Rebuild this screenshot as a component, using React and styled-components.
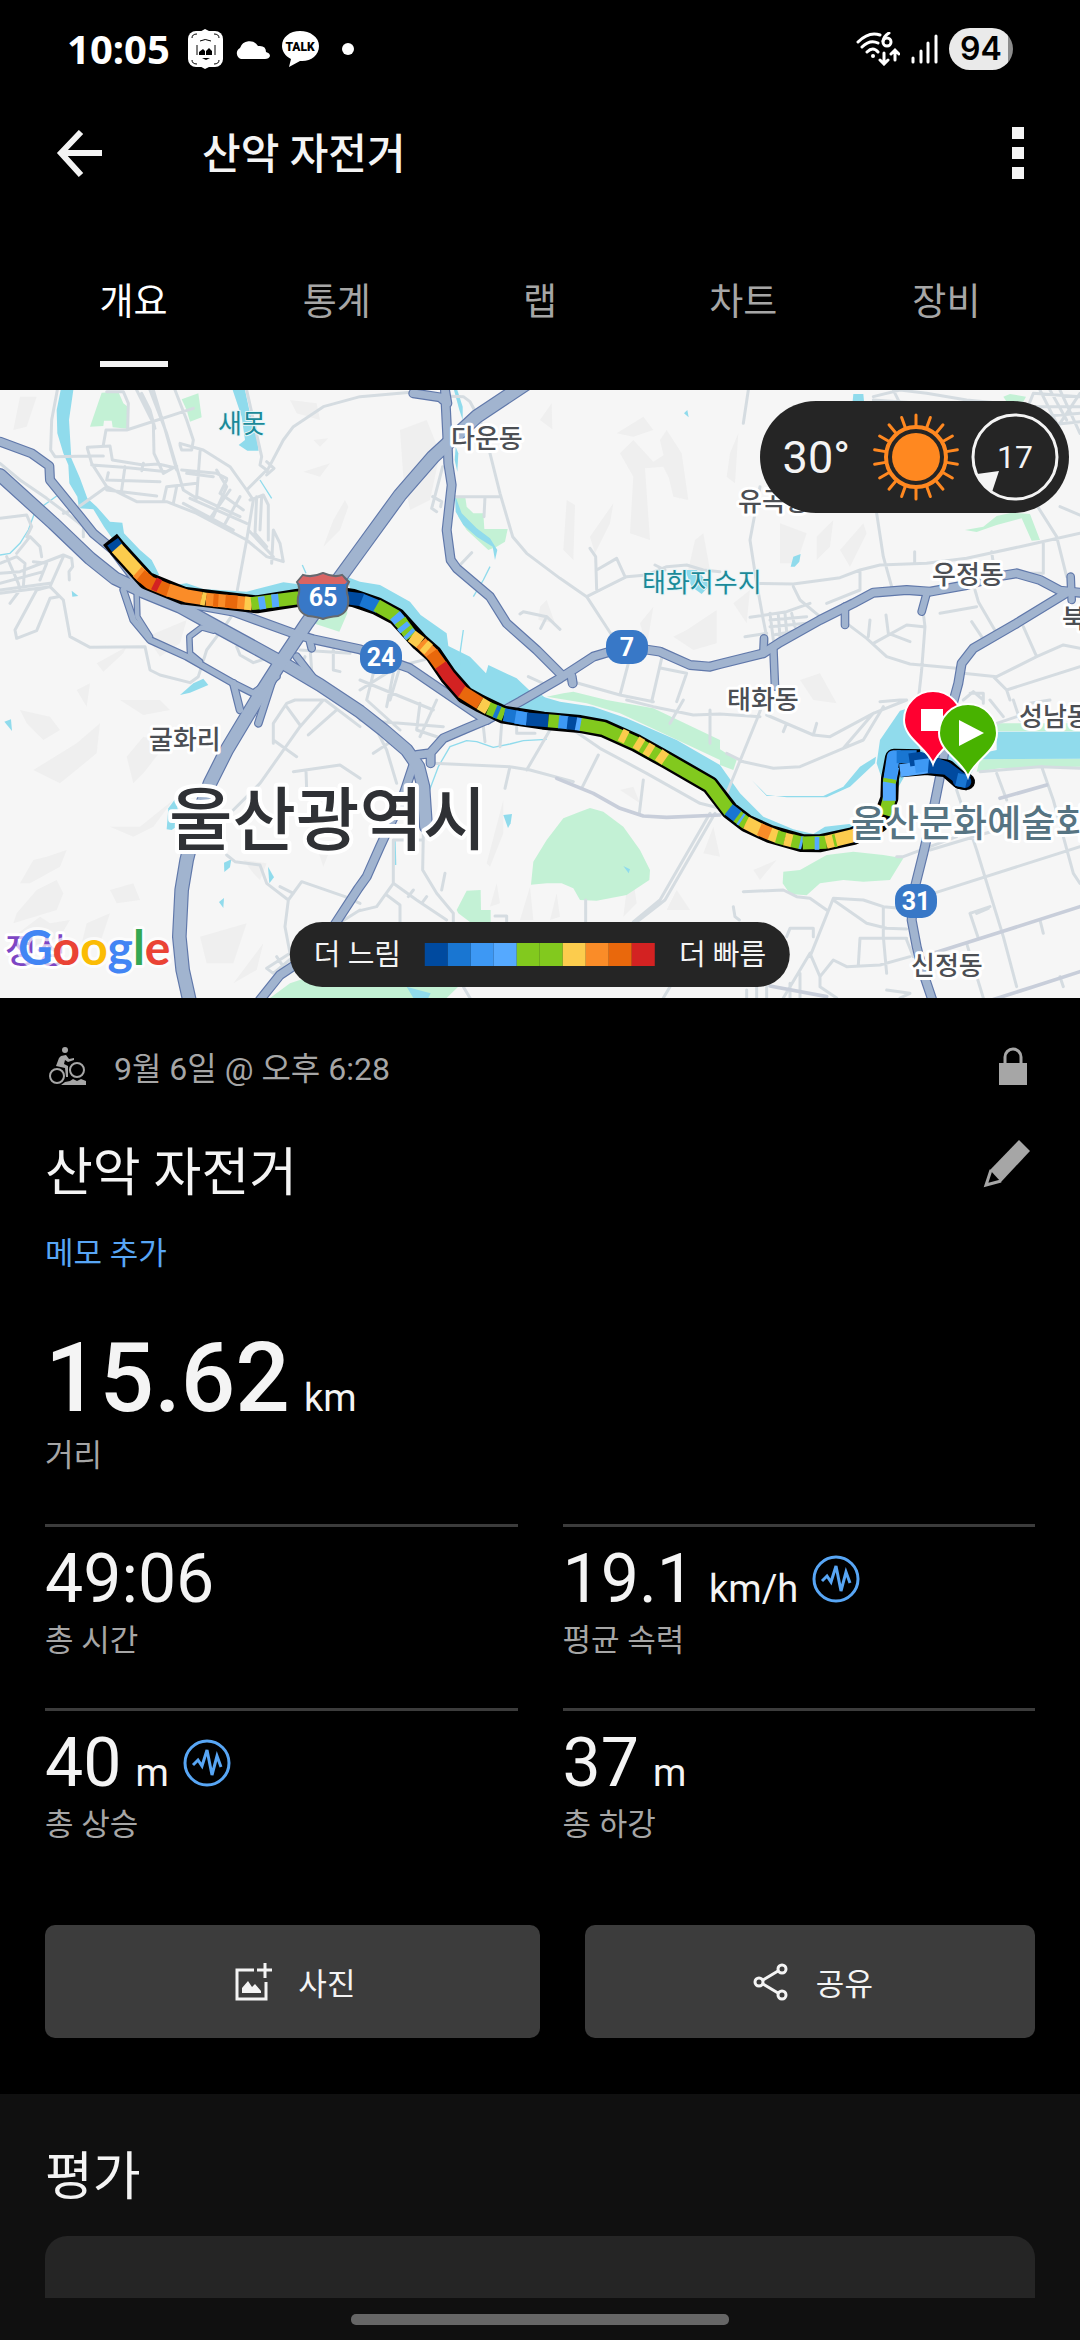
import React from 'react';
import styled, { createGlobalStyle } from 'styled-components';

const GlobalStyle = createGlobalStyle`
  * {
    box-sizing: border-box;
  }
  body {
    margin: 0;
    background: #000;
    color: #f4f4f4;
    font-family: Roboto, "Noto Sans CJK KR", sans-serif;
  }
  button {
    padding: 0;
    border: 0;
    background: none;
    color: inherit;
    font: inherit;
    cursor: pointer;
  }
`;

const Page = styled.div`
  display: flex;
  flex-direction: column;
  min-height: 100vh;
`;

const StatusBar = styled.div`
  display: flex;
  align-items: center;
  justify-content: space-between;
  height: 98px;
  padding: 0 67px;
`;

const StatusGroup = styled.div`
  display: flex;
  align-items: center;
  gap: ${props => props.gap}px;
`;

const Clock = styled.span`
  margin-right: 6px;
  color: #fff;
  font-family: "Noto Sans", sans-serif;
  font-size: 40px;
  font-weight: 700;
  line-height: 48px;
`;

const Dot = styled.span`
  width: 12px;
  height: 12px;
  margin-left: 11px;
  border-radius: 50%;
  background: #fff;
`;

const Battery = styled.span`
  width: 64px;
  height: 42px;
  border-radius: 21px;
  background: linear-gradient(to right, #eaeaea 59px, #8c8c8c 59px);
  color: #000;
  font-family: Inter, sans-serif;
  font-size: 32px;
  font-weight: 600;
  line-height: 42px;
  text-align: center;
`;

const Header = styled.header`
  display: flex;
  align-items: center;
  height: 110px;
  padding: 0 56px;
`;

const HeaderTitle = styled.h1`
  flex: 1;
  margin: 0 0 0 99px;
  padding-top: 4px;
  font-size: 42px;
  font-weight: 500;
  line-height: 60px;
`;

const IconButton = styled.button`
  display: flex;
`;

const Tabs = styled.nav`
  display: flex;
  padding: 68px 32px 23px;
`;

const Tab = styled.button`
  flex: 1;
  color: ${props => props.$active ? '#fff' : '#a6a6a6'};
  font-size: 37px;
  line-height: 54px;
`;

const TabLabel = styled.span`
  display: inline-block;
  padding-bottom: 31px;
  border-bottom: 6px solid ${props => props.$active ? '#f4f4f4' : 'transparent'};
`;

const MapPanel = styled.section`
  position: relative;
`;

const MapDrawing = styled.svg`
  display: block;
  width: 100%;
  height: auto;
  font-family: Roboto, "Noto Sans CJK KR", sans-serif;
`;

const WeatherPill = styled.div`
  position: absolute;
  top: 11px;
  right: 11px;
  display: flex;
  align-items: center;
  gap: 11px;
  height: 112px;
  padding: 0 10px 0 23px;
  border-radius: 56px;
  background: #252525;
`;

const Temperature = styled.span`
  margin-right: 11px;
  font-size: 45px;
`;

const WindBadge = styled.span`
  position: relative;
  display: flex;
  align-items: center;
  justify-content: center;
  width: 88px;
  height: 88px;
  font-size: 32px;
`;

const WindDial = styled.svg`
  position: absolute;
  inset: 0;
`;

const LegendPill = styled.div`
  position: absolute;
  bottom: 11px;
  left: 50%;
  display: flex;
  align-items: center;
  gap: 24px;
  height: 65px;
  padding: 0 24px;
  border-radius: 33px;
  background: #252525;
  font-size: 29px;
  line-height: 44px;
  white-space: nowrap;
  transform: translateX(-50%);
`;

const LegendBar = styled.div`
  display: flex;
`;

const LegendStep = styled.span`
  width: 23px;
  height: 23px;
  background: ${props => props.color};
`;

const Details = styled.section`
  padding: 42px 45px 56px;
`;

const MetaRow = styled.div`
  display: flex;
  align-items: center;
  height: 52px;
  padding: 0 6px 0 3px;
`;

const MetaText = styled.span`
  flex: 1;
  margin-left: 26px;
  color: #a6a6a6;
  font-size: 32px;
`;

const TitleRow = styled.div`
  display: flex;
  align-items: flex-start;
  justify-content: space-between;
  margin-top: 46px;
  padding-right: 4px;
`;

const Title = styled.h2`
  margin: 0;
  padding-top: 4px;
  font-size: 52px;
  font-weight: 400;
  line-height: 64px;
`;

const NoteLink = styled.a`
  display: block;
  width: fit-content;
  margin-top: 26px;
  color: #58a6f5;
  font-size: 31px;
  line-height: 44px;
  text-decoration: none;
`;

const Value = styled.div`
  display: flex;
  align-items: baseline;
  gap: 14px;
  height: ${props => props.$large ? '112px' : '80px'};
  font-size: ${props => props.$large ? '96px' : '68px'};
  font-weight: ${props => props.$large ? 500 : 400};
  line-height: ${props => props.$large ? '112px' : '80px'};
`;

const Unit = styled.span`
  font-size: 38px;
  font-weight: 400;
  line-height: 40px;
`;

const WaveIcon = styled.svg`
  align-self: center;
`;

const Label = styled.div`
  color: #a6a6a6;
  font-size: 31px;
  line-height: 44px;
`;

const Distance = styled.div`
  margin-top: 46px;
`;

const StatGrid = styled.div`
  display: grid;
  grid-template-columns: 1fr 1fr;
  gap: 45px;
  margin-top: 46px;
`;

const Stat = styled.div`
  padding-top: 12px;
  border-top: 3px solid #3c3c3c;
`;

const Actions = styled.div`
  display: flex;
  gap: 45px;
  margin-top: 78px;
`;

const ActionButton = styled.button`
  display: flex;
  flex: ${props => props.$grow} 1 0;
  align-items: center;
  justify-content: center;
  gap: 26px;
  height: 113px;
  padding-left: 5px;
  border-radius: 10px;
  background: #3c3c3c;
  font-size: 31px;
`;

const Rating = styled.section`
  flex: 1;
  padding: 48px 45px 0;
  background: #101010;
`;

const RatingCard = styled.div`
  height: 62px;
  margin-top: 26px;
  border-radius: 22px 22px 0 0;
  background: #252525;
`;

const NavArea = styled.div`
  display: flex;
  justify-content: center;
  height: 42px;
  padding-top: 16px;
  background: #101010;
`;

const NavHandle = styled.span`
  width: 35%;
  height: 11px;
  border-radius: 5px;
  background: #666;
`;

const speedColors = [
  '#004a9f', '#1976d2', '#3d98f4', '#55a9ff', '#82c91e',
  '#82c91e', '#fccc4d', '#fa8c28', '#e9680c', '#d32222',
];

// Map geometry uses three units to one pixel
const terrain = [
  'M1200 120 L1280 90 1320 190 1290 330 1230 360 1210 260Z', 'M1620 90 L1655 40 1657 118Z',
  'M1850 130 L1930 80 1960 120 1900 140Z', 'M1860 190 L1900 150 1960 215 2000 190 2040 330 1990 230 1935 235 1950 450 1890 430 1900 260Z',
  'M1980 150 L2000 120 2045 190 2065 330 2020 320Z', 'M1700 330 L1725 345 1720 510 1690 480Z',
  'M1770 440 L1840 340 1830 400 1785 490Z', 'M1620 650 L1640 630 1665 700 1615 690Z',
  'M1920 700 L1960 650 1940 770Z', 'M2020 740 L2060 720 2150 660 2150 760 2080 780Z',
  'M1860 1200 L1900 1190 1920 1240Z', 'M2085 450 L2110 430 2130 540 2060 560Z',
  'M2340 400 L2420 430 2390 520 2340 520Z', 'M2450 440 L2500 390 2490 470 2450 510Z',
  'M2520 480 L2590 400 2600 430 2550 530Z', 'M2190 190 L2215 130 2205 280 2180 260Z',
  'M2200 640 L2250 600 2240 700Z', 'M2400 870 L2460 850 2510 940 2440 930Z',
  'M60 20 L110 20 80 110 40 120Z', 'M870 30 L950 40 960 90 890 70Z',
  'M940 150 L985 145 960 170Z', 'M910 245 L990 220 960 260Z', 'M1000 390 L1035 330 1045 350 1020 420 970 470Z',
  'M290 820 L380 770 370 790 310 845Z', 'M440 740 L560 690 540 760 480 800Z', 'M230 900 L270 880 260 950Z',
  'M60 960 L150 980 180 1020 130 1050 80 1000Z', 'M100 1140 L230 1060 300 1000 290 1090 180 1180Z',
  'M380 1100 L430 1040 500 1060 430 1150 400 1180Z', 'M330 1310 L420 1310 470 1270 520 1230 460 1310 400 1340Z',
  'M60 1480 L100 1410 140 1400 200 1380 180 1430 90 1480Z', 'M110 1500 L170 1470 190 1510 170 1560 40 1600 50 1570Z',
  'M40 1640 L120 1580 150 1600 210 1590 180 1640 90 1680Z', 'M260 1600 L330 1570 300 1660 240 1680Z',
  'M330 1500 L400 1480 420 1530 350 1540Z', 'M730 1410 L800 1420 780 1470 760 1450Z',
  'M600 1640 L740 1600 700 1720 620 1720Z', 'M700 1780 L790 1660 770 1740Z',
  'M360 930 L480 930 510 960 430 975Z', 'M1460 1420 L1510 1230 1510 1330 1470 1430Z',
  'M1470 1550 L1490 1480 1500 1540Z', 'M1560 1590 L1590 1490 1600 1590Z', 'M1650 1590 L1670 1510 1680 1580Z',
  'M1880 1500 L1900 1470 1910 1540 1870 1580Z', 'M2000 1560 L2030 1500 2070 1560Z',
  'M2110 1390 L2140 1310 2160 1400Z', 'M2260 1440 L2330 1410 2280 1470Z', 'M940 1340 L990 1380 970 1430Z',
];

const waterAreas = [
  'M182 0 L220 0 207 90 214 205 240 265 262 325 290 350 330 395 367 398 372 430 420 480 455 510 478 555 440 560 390 505 340 450 312 410 280 358 237 355 232 320 208 280 205 225 190 190 172 130 170 60Z',
  'M698 0 L735 0 750 70 770 140 776 182 742 182 716 165 735 150 725 80Z',
  'M480 590 L560 580 610 597 740 605 850 577 890 582 900 600 780 625 600 612Z',
  'M1040 560 L1080 575 1140 585 1230 635 1262 675 1340 730 1345 768 1410 800 1458 850 1465 825 1550 865 1600 912 1680 935 1780 950 1880 985 2030 1050 2160 1125 2220 1210 2290 1280 2380 1318 2440 1332 2475 1310 2580 1298 2660 1260 2650 1180 2630 1120 2640 1050 2700 962 2740 950 2760 1080 2900 1100 2990 1080 2990 1025 3240 1025 3240 1106 2940 1108 2900 1170 2730 1130 2690 1200 2640 1330 2450 1370 2300 1330 2180 1240 2140 1190 1980 1100 1800 1020 1630 1010 1480 980 1380 920 1300 810 1190 690 1060 630Z',
  'M2255 1170 L2270 1185 2300 1215 2360 1222 2480 1222 2550 1190 2625 1120 2628 1100 2580 1130 2530 1190 2470 1218 2300 1218Z',
  'M1362 0 L1372 0 1388 50 1388 90 1378 60Z', 'M1367 170 L1375 190 1372 245 1364 210Z',
  'M1365 315 L1385 370 1430 415 1470 445 1492 480 1485 510 1478 470 1430 440 1390 405 1367 365Z',
  'M540 915 L580 880 610 866 625 885 570 908Z', 'M13 995 L33 988 36 1023Z',
  'M500 1318 L505 1255 525 1228 545 1300 515 1320Z', 'M672 1418 L694 1408 690 1432 673 1446Z',
  'M804 1430 L822 1462 808 1480Z', 'M657 1536 L672 1524 670 1554Z', 'M1510 1275 L1536 1272 1532 1300 1524 1314Z',
  'M2560 12 L2590 12 2592 33 2558 33Z', 'M2372 530 L2380 500 2402 492 2398 515 2384 530Z',
  'M2055 540 L2090 540 2130 585 2105 612 2075 590Z', 'M2052 70 L2062 60 2066 82Z',
  'M215 602 L235 618 217 620Z', 'M1870 1428 L1890 1438 1886 1450Z', 'M1220 1790 L1255 1800 1292 1810 1285 1824 1240 1824Z',
];

const streams = [
  'M170 318 L105 365 85 420 60 460 30 490 0 495', 'M1378 830 L1380 790 1390 720', 'M780 270 L815 325',
  'M1285 1210 L1315 1130 1350 1070 1400 1052 1430 1055 1480 1072 1530 1062 1570 1052 1640 1048',
  'M1185 1350 L1187 1425', 'M1420 620 L1450 570 1470 530', 'M907 525 L918 550',
  'M1640 930 L1616 910',
];

const parks = [
  'M305 8 L355 5 370 40 383 50 382 116 338 112 335 92 312 92 310 108 270 110Z',
  'M545 28 L595 10 605 82 570 95 560 60Z', 'M940 700 L1040 640 1042 670 1018 725Z',
  'M1367 322 L1396 322 1400 350 1420 370 1450 370 1453 417 1523 417 1515 455 1490 470 1465 480 1400 420 1375 380Z',
  'M1690 910 L1720 905 1820 930 1960 955 2160 1050 2160 1110 2000 1035 1860 970 1760 940 1640 920Z',
  'M1593 1484 L1600 1415 1640 1350 1690 1285 1740 1265 1770 1254 1810 1265 1870 1310 1920 1380 1950 1440 1948 1470 1880 1515 1790 1532 1740 1530 1720 1495 1685 1480 1640 1480Z',
  'M1370 1560 L1400 1502 1442 1500 1443 1560 1472 1560 1472 1596 1410 1596 1375 1570Z',
  'M810 1824 L870 1780 960 1750 1380 1785 1340 1824Z',
  'M2350 1445 L2400 1440 2480 1395 2560 1385 2650 1395 2710 1405 2670 1470 2590 1475 2530 1470 2460 1480 2420 1516 2370 1512 2348 1480Z',
  'M2895 420 L2950 410 2990 378 3035 368 3090 372 3120 450 3095 452 3065 385 2990 405 2930 426Z',
  'M3010 20 L3030 12 3078 20 3070 35 3020 35Z', 'M2940 1108 L3240 1106 3240 1130 3000 1135 2930 1145Z',
  'M2160 1078 L2210 1110 2200 1140 2160 1125Z', 'M2990 1000 L3240 1000 3240 1024 2990 1024Z',
];

const streets = [
  'M172 0 L155 90 152 180 165 200 270 198 310 198', 'M0 385 L80 375 95 410 80 440', 'M0 220 L60 270 140 325 200 370 250 410 250 440',
  'M320 290 L230 355 190 370', 'M0 550 L60 545 190 495 215 505 218 530 207 545 208 570',
  'M0 520 L50 500 75 520 70 590', 'M20 500 L55 580 60 600 30 640', 'M190 500 L150 590 110 600 45 720 50 745 110 722 150 625 175 620',
  'M0 610 L150 590 190 630 210 740 270 772 435 770 450 840 480 855 570 878 595 860 620 780 680 700 700 670',
  'M50 490 L90 440 120 470 125 500', 'M100 515 L140 520 120 570', 'M0 580 L130 545', 'M710 770 L720 795 760 818 800 805',
  'M310 165 L318 120 380 120 580 55', 'M320 5 L370 5 385 40 383 115', 'M262 172 L330 168 337 210 430 225 475 222 530 235',
  'M262 175 L275 220 320 290 410 335 500 335 590 370 740 450 800 500 850 515 840 460 820 420 815 520',
  'M275 225 L370 232 500 245', 'M325 248 L320 270 480 275', 'M375 230 L365 300', 'M320 300 L470 318', 'M430 220 L425 242',
  'M410 0 L460 100 462 190 490 250 530 228', 'M425 10 L450 60 465 115 440 50 420 20', 'M450 0 L500 130 550 300 590 325',
  'M525 0 L560 90 580 150 575 180 545 180 540 165', 'M540 160 L610 180 690 230 740 300 760 330',
  'M600 185 L590 320', 'M500 290 L590 280', 'M545 240 L650 250 680 265', 'M460 0 L490 100 530 240', 'M560 250 L640 260',
  'M500 290 L490 335', 'M530 290 L520 340', 'M590 320 L720 380', 'M570 325 L740 400', 'M550 340 L700 420', 'M650 240 L680 290 640 380',
  'M680 270 L660 310 730 360', 'M720 320 L670 410', 'M690 300 L630 385', 'M760 330 L740 450', 'M740 300 L800 240 780 225 785 200 740 0',
  'M750 330 L790 315 805 345 805 450', 'M770 320 L765 430 800 470', 'M785 320 L780 420', 'M745 420 L820 500', 'M740 450 L712 600',
  'M800 245 L850 150 880 110 970 50 1080 20 1250 5', 'M800 215 L822 235 800 255', 'M0 600 L150 580',
  'M1260 15 L1390 20 1410 35 1440 90 1470 190 1500 310 1538 440 1580 490 1680 565 1760 620 1835 735',
  'M1365 320 L1500 320', 'M1455 320 L1452 380', 'M1328 230 L1295 355 1310 365', 'M1298 320 L1325 335 1322 350', 'M1380 525 L1415 488',
  'M1760 620 L1880 560 1940 555 2000 530 2060 525 2110 540 2160 545', 'M1770 475 L1787 500 1790 600', 'M1790 540 L1850 505 1875 560', 'M1965 525 L1995 540',
  'M1560 672 L1570 665 1640 680 1680 718', 'M1640 680 L1622 715', 'M1585 860 L1640 885', 'M1700 870 L1860 915 1960 935',
  'M1885 820 L1860 915', 'M1985 805 L1955 935', 'M1985 835 L2060 850 2030 935', 'M930 770 L935 840', 'M1000 780 L1000 840 1020 845', 'M900 780 L1050 790', 'M915 800 L890 860',
  'M1150 840 L1310 800', 'M1200 830 L1170 930', 'M1080 900 L1160 850', 'M1120 850 L1100 930 1200 1020', 'M1180 850 L1160 950', 'M1080 870 L1300 960',
  'M1260 940 L1250 1020 1340 1050', 'M1310 930 L1260 1040', 'M1080 990 L1330 1010', 'M1120 1000 L1160 1080 1190 1180', 'M1120 1090 L1180 1050',
  'M2245 0 L2230 100', 'M2280 290 L2250 450 2270 580 2290 690 2310 790', 'M2270 580 L2380 582 2520 563 2580 540 2640 525 2780 520 2900 505 3060 470 3240 430',
  'M2630 370 L2650 500 2675 590', 'M2744 485 L2744 515', 'M2975 485 L2980 520', 'M2580 540 L2580 600 2480 640', 'M2380 590 L2400 630 2460 680',
  'M2250 682 L2360 665 2430 640', 'M2235 740 L2300 730', 'M2310 670 L2320 750', 'M2335 675 L2340 740', 'M2355 670 L2360 725', 'M2375 670 L2385 710',
  'M2310 690 L2420 680', 'M2310 710 L2420 700', 'M2320 735 L2390 722',
  'M2540 700 L2600 745 2660 800 2730 822 2870 835', 'M2605 740 L2610 690', 'M2620 760 L2720 705 2770 710', 'M2658 675 L2665 730 2730 755',
  'M2770 670 L2775 710 2765 840 2755 930', 'M2820 670 L2930 650', 'M2925 600 L2935 635 2990 730', 'M2915 695 L2955 755',
  'M3070 710 L3110 800', 'M2890 850 L2990 860 3110 800 3190 765 3240 775', 'M2980 860 L3020 900 3240 830', 'M3020 900 L3030 930',
  'M3110 345 L3170 440 3200 560', 'M3130 460 L3130 550 3090 550', 'M3180 350 L3240 375', 'M2620 20 L2700 0 2780 10 2900 30 3000 40', 'M2620 30 L2760 40', 'M2680 0 L2700 40',
  'M3080 60 L3100 10 3240 20', 'M3120 0 L3180 120', 'M3150 0 L3200 90', 'M3100 50 L3240 50', 'M3120 80 L3240 70', 'M3100 110 L3240 95', 'M3180 0 L3240 130', 'M3240 10 L3160 130', 'M2890 930 L2920 905 2950 930',
  'M820 1060 L820 1000 860 940 885 930', 'M885 930 L970 930 900 1010 780 1180 700 1260', 'M860 950 L900 1005', 'M820 1050 L890 1100',
  'M1010 960 L925 1035', 'M975 930 L1080 1010', 'M880 1145 L1020 1125 1080 1165', 'M918 1140 L920 1200', 'M680 1395 L705 1415 780 1425 800 1480 865 1530 905 1475 1035 1520 1080 1540',
  'M865 1530 L855 1610 870 1690 800 1735 820 1750 880 1700', 'M840 1490 L880 1510', 'M830 1700 L850 1730', 'M1000 1610 L1080 1560',
  'M1300 1120 L1530 1130 1590 1140 1720 1175', 'M1530 1130 L1515 1195', 'M1650 1020 L1580 1140', 'M1720 1020 L1800 1075 1940 1150 2100 1240 2160 1255', 'M1795 1095 L1745 1195', 'M1930 1170 L1918 1270',
  'M1450 1010 L1455 1055', 'M1505 1000 L1500 1070', 'M1550 1010 L1550 1030 1605 1030', 'M1270 1330 L1268 1440 1310 1510 1360 1570 1360 1596',
  'M1180 1350 L1180 1480 1130 1550 1080 1562', 'M1180 1350 L1265 1350', 'M1180 1480 L1250 1530 1340 1590', 'M1160 1515 L1200 1545 1200 1596', 'M1335 1450 L1325 1500', 'M1240 1500 L1225 1520', 'M1280 1520 L1265 1540',
  'M1485 1578 L1520 1578 1520 1596', 'M1757 1530 L1757 1596', 'M2130 1270 L1980 1530 1900 1596', 'M2145 1270 L1995 1530 1910 1596', 'M1390 1790 L1410 1824', 'M2010 1790 L1990 1824',
  'M2160 1260 L2270 990 2285 950', 'M2300 975 L2440 1035 2490 1040 2620 970 2720 930', 'M2360 1000 L2350 1025', 'M2450 1000 L2440 1035', 'M2620 970 L2530 1075',
  'M2180 1090 L2230 1115 2320 1135 2400 1130 2530 1075 2590 1050 2650 950', 'M2870 1200 L2930 1380 3010 1640 3050 1790', 'M2990 1150 L3020 1230', 'M2940 1145 L3120 1130 3240 1135', 'M3125 1130 L3160 1230 3220 1450 3240 1480',
  'M2690 1400 L2710 1400 2870 1340', 'M2790 1380 L2990 1320', 'M2800 1510 L3240 1370', 'M2230 1505 L2350 1500 2390 1520 2430 1525 2480 1560', 'M2430 1700 L2470 1600 2500 1525 2590 1530 2650 1550 2700 1555',
  'M2500 1530 L2600 1600 2660 1615 2720 1617', 'M2650 1550 L2650 1640 2660 1750', 'M2580 1645 L2720 1645', 'M2580 1645 L2575 1725', 'M2720 1650 L2740 1700', 'M2430 1690 L2460 1760 2460 1790 2510 1824', 'M2460 1760 L2500 1710 2540 1730 2640 1725 2730 1700',
  'M2430 1690 L2350 1824', 'M2360 1640 L2370 1615 2440 1615 2440 1640', 'M2200 1550 L2205 1580 2218 1590', 'M2930 1570 L2965 1555', 'M2910 1570 L2970 1550', 'M2910 1570 L2935 1645', 'M2900 1660 L2950 1824',
  'M3120 1590 L3130 1630', 'M3180 1760 L3190 1790', 'M2660 1800 L2730 1810 2700 1824', 'M2400 1750 L2400 1824', 'M2370 1780 L2370 1824', 'M2240 1800 L2240 1824', 'M2270 1790 L2270 1824', 'M2300 1790 L2300 1824',
  'M1880 930 L1960 950 2080 975 2160 972 2280 980', 'M2050 930 L2010 1000', 'M2130 960 L2130 1060', 'M2970 930 L3010 980', 'M3040 930 L3060 990', 'M3090 940 L3150 930', 'M2990 1000 L3110 960',
  'M2720 930 L2700 930 2640 935', 'M2910 910 L2950 910 2950 940',
];

const lilacRoads = [
  'M1670 1165 L1780 1210 1860 1255 1930 1278 2000 1282 2160 1275', 'M2800 1690 L2990 1630 3240 1550', 'M2960 1835 L3100 1790 3240 1745', 'M3000 1225 L3140 1185', 'M2310 1788 L2480 1820',
];

const highways = [
  { width: 24, d: 'M370 600 L400 690 450 750 560 800 700 880 760 910 830 860' },
  { width: 20, d: 'M410 610 L412 680 450 740' },
  { width: 20, d: 'M640 722 L605 712 568 740 570 790 600 815' },
  { width: 26, d: 'M700 880 L720 960 M830 830 L775 1000 M930 755 L935 775 M890 800 L960 890' },
  { width: 30, d: 'M0 155 L95 190 148 228 150 270 240 380 280 430 340 480 400 560 560 640 700 665 880 730 940 748 1080 778 1145 805 1230 835 1310 890 1450 985' },
  { width: 30, d: 'M1460 990 L1400 1015 1330 1045 1290 1090 1250 1095 M1292 1090 L1292 1120' },
  { width: 30, d: 'M1245 1110 L1205 1230 1140 1370 1100 1460 1075 1495 1000 1610 900 1715 840 1755 780 1830' },
  { width: 30, d: 'M1240 10 L1320 22 1342 40 1335 0 1342 140 1345 220 1355 285 1340 420 1352 510 1370 535 1470 620 1520 700 1610 780 1685 855 M1715 860 L1718 880' },
  { width: 30, d: 'M1460 990 L1560 935 1680 865 1780 800 1880 770 1980 785 2070 825 2130 830 2160 822 2290 790 2340 757 2460 690 2560 640 2620 608 2720 600 2790 605 2900 585 2990 560 3050 550 3120 570 3180 602 3240 608' },
  { width: 26, d: 'M2320 770 L2325 890 M2292 745 L2290 790 M2535 650 L2535 705 M2780 610 L2765 665 M3212 560 L3215 630' },
  { width: 30, d: 'M3200 608 L3050 700 2920 775 2885 820 2875 880 2860 935 2820 1160 2800 1260 2770 1390 2745 1490 2735 1590 2750 1670 2770 1750 2797 1830' },
  { width: 42, d: 'M0 255 L160 400 270 505 345 565 430 605 540 650 640 705 750 765 850 820 960 885 1080 965 1150 1020 1220 1080 1255 1130 1270 1190 1278 1310' },
  { width: 44, d: 'M1580 -20 L1430 80 1300 200 1200 315 1080 480 1000 590 920 700 840 820 770 930 680 1080 630 1180 590 1290 560 1410 545 1500 538 1640 548 1740 568 1830' },
];

const routeSegments = [
  { color: 0, d: 'M338 455 L352 475' },
  { color: 6, d: 'M350 474 L428 560' },
  { color: 7, d: 'M412 545 L432 563' },
  { color: 8, d: 'M422 555 L450 578 510 603' },
  { color: 9, d: 'M462 580 L478 588' },
  { color: 7, d: 'M505 600 L560 618 605 625' },
  { color: 6, d: 'M604 625 L618 628' },
  { color: 7, d: 'M618 628 L755 641' },
  { color: 8, d: 'M640 631 L655 632' },
  { color: 8, d: 'M676 634 L712 637' },
  { color: 6, d: 'M734 639 L756 641' },
  { color: 4, d: 'M754 641 L890 624 1040 620' },
  { color: 3, d: 'M776 640 L796 637' },
  { color: 3, d: 'M815 633 L836 631' },
  { color: 0, d: 'M1030 622 L1090 630' },
  { color: 1, d: 'M1085 630 L1135 650' },
  { color: 4, d: 'M1130 646 L1190 680' },
  { color: 3, d: 'M1185 676 L1204 698' },
  { color: 4, d: 'M1200 692 L1235 740' },
  { color: 3, d: 'M1206 706 L1216 718' },
  { color: 3, d: 'M1224 728 L1232 736' },
  { color: 6, d: 'M1235 738 L1262 758' },
  { color: 7, d: 'M1262 758 L1300 795' },
  { color: 6, d: 'M1272 766 L1286 778' },
  { color: 8, d: 'M1295 788 L1325 830' },
  { color: 9, d: 'M1322 825 L1345 858 1390 910' },
  { color: 8, d: 'M1385 905 L1440 940' },
  { color: 6, d: 'M1440 940 L1465 955' },
  { color: 4, d: 'M1465 955 L1512 974' },
  { color: 1, d: 'M1485 963 L1497 968' },
  { color: 1, d: 'M1512 974 L1570 985' },
  { color: 2, d: 'M1546 981 L1582 987' },
  { color: 0, d: 'M1580 987 L1645 992' },
  { color: 4, d: 'M1645 992 L1680 995' },
  { color: 2, d: 'M1676 995 L1705 998' },
  { color: 0, d: 'M1702 998 L1730 1001' },
  { color: 3, d: 'M1728 1001 L1744 1004' },
  { color: 4, d: 'M1742 1003 L1810 1015 1910 1060 2000 1110 2130 1185 2190 1265' },
  { color: 6, d: 'M1862 1034 L1880 1043' },
  { color: 6, d: 'M1908 1056 L1926 1067' },
  { color: 6, d: 'M1938 1074 L1956 1085' },
  { color: 6, d: 'M1976 1094 L1996 1108' },
  { color: 1, d: 'M2186 1258 L2214 1280' },
  { color: 4, d: 'M2212 1279 L2240 1300' },
  { color: 3, d: 'M2220 1286 L2226 1290' },
  { color: 6, d: 'M2238 1298 L2285 1322' },
  { color: 7, d: 'M2278 1318 L2312 1332' },
  { color: 6, d: 'M2310 1331 L2335 1341' },
  { color: 4, d: 'M2330 1340 L2355 1347' },
  { color: 6, d: 'M2354 1347 L2378 1353' },
  { color: 4, d: 'M2376 1352 L2405 1359' },
  { color: 3, d: 'M2400 1357 L2408 1359' },
  { color: 4, d: 'M2408 1359 L2480 1357' },
  { color: 3, d: 'M2444 1360 L2458 1360' },
  { color: 6, d: 'M2478 1357 L2560 1337 2640 1300' },
  { color: 4, d: 'M2500 1353 L2508 1351' },
  { color: 4, d: 'M2655 1275 L2668 1225' },
  { color: 3, d: 'M2668 1232 L2668 1180 2678 1130' },
  { color: 4, d: 'M2668 1178 L2670 1166' },
  { color: 2, d: 'M2670 1166 L2680 1100 2702 1100' },
  { color: 1, d: 'M2690 1100 L2750 1100' },
  { color: 3, d: 'M2700 1142 L2790 1130' },
  { color: 0, d: 'M2728 1110 L2760 1105 2840 1135' },
  { color: 2, d: 'M2745 1130 L2790 1124' },
  { color: 0, d: 'M2785 1130 L2840 1135 2880 1165 2905 1175' },
  { color: 1, d: 'M2870 1168 L2900 1175' },
];

const routeOutline = 'M330 448 L352 475 440 572 550 617 770 643 890 624 980 612 1060 624 1130 648 1190 680 1260 757 1300 792 1345 858 1395 915 1440 940 1510 974 1630 992 1740 1002 1810 1015 1910 1060 2000 1110 2130 1185 2190 1262 2240 1300 2310 1332 2405 1359 2460 1360 2560 1338 2640 1300 2668 1225 2670 1166 2682 1103 2760 1105 M2700 1135 L2780 1128 2840 1135 2880 1170 2905 1175';

const placeLabels = [
  { text: '새못', x: 218, y: 43, kind: 'water' },
  { text: '태화저수지', x: 642, y: 202, kind: 'water' },
  { text: '다운동', x: 451, y: 58, kind: 'town' },
  { text: '유곡동', x: 738, y: 121, kind: 'town' },
  { text: '우정동', x: 932, y: 194, kind: 'town' },
  { text: '북정동', x: 1062, y: 238, kind: 'town' },
  { text: '굴화리', x: 149, y: 359, kind: 'town' },
  { text: '태화동', x: 727, y: 319, kind: 'town' },
  { text: '성남동', x: 1019, y: 336, kind: 'town' },
  { text: '신정동', x: 911, y: 585, kind: 'town' },
];

const MapLabel = styled.text`
  fill: ${props => props.$kind === 'water' ? '#1b8a99' : '#4c4f54'};
  stroke: ${props => props.$kind === 'water' ? '#e4f5f8' : '#fff'};
  stroke-width: ${props => props.$kind === 'water' ? 2 : 6}px;
  stroke-linejoin: round;
  paint-order: stroke;
  font-size: 26px;
  font-weight: ${props => props.$kind === 'water' ? 400 : 500};
`;

const CityLabel = styled(MapLabel)`
  fill: #2f3135;
  font-size: 69px;
  stroke-width: 8px;
`;

const VenueLabel = styled(MapLabel)`
  fill: #567482;
  font-size: 37px;
`;

const PeakLabel = styled(MapLabel)`
  fill: #7d46c4;
  font-size: 34px;
`;

const ShieldText = styled.text`
  fill: #fff;
  font-size: 25px;
  font-weight: 700;
  text-anchor: middle;
`;

const GoogleText = styled.text`
  font-family: Lato, sans-serif;
  font-size: 48px;
  font-weight: 700;
  stroke: #fff;
  stroke-opacity: 0.7;
  stroke-width: 6px;
  stroke-linejoin: round;
  paint-order: stroke;
`;

const RoadShield = ({ x, y, number }) => (
  <g>
    <rect x={x - 21} y={y - 17} width="42" height="34" rx="15" fill="#3878c7" />
    <ShieldText x={x} y={y + 9}>{number}</ShieldText>
  </g>
);

const Pin = ({ x, y, color, children }) => (
  <g transform={`translate(${x} ${y})`}>
    <path d="M0 43 C-5 27 -29 18 -29 -1 A29 29 0 0 1 29 -1 C29 18 5 27 0 43Z" fill={color} stroke="#fff" strokeWidth="2" />
    {children}
  </g>
);

const RouteMap = () => (
  <MapDrawing viewBox="0 0 1080 608" role="img" aria-label="경로 지도">
    <rect width="1080" height="608" fill="#f6f6f6" />
    <g transform="scale(0.33333)" fill="none" strokeLinejoin="round">
      <path d={terrain.join(' ')} fill="#efefef" />
      <path d={parks.join(' ')} fill="#c3f1d5" />
      {waterAreas.map(d => <path key={d} d={d} fill="#90dbec" />)}
      <path d={streams.join(' ')} stroke="#90dbec" strokeWidth="4" />
      <path d={streets.join(' ')} stroke="#d5dce1" strokeWidth="9" strokeLinecap="round" />
      <path d={lilacRoads.join(' ')} stroke="#c8ceda" strokeWidth="11" strokeLinecap="round" />
      {highways.map(road => (
        <path key={road.d} d={road.d} stroke="#6078aa" strokeWidth={road.width} strokeLinecap="round" />
      ))}
      {highways.map(road => (
        <path key={road.d} d={road.d} stroke="#a1b4cf" strokeWidth={road.width - 7} strokeLinecap="round" />
      ))}
      <path d={routeOutline} stroke="#000" strokeWidth="54" />
      <path d="M2880 1172 L2900 1175" stroke="#000" strokeWidth="50" strokeLinecap="round" />
      <path d="M2876 1172 L2896 1175" stroke="#004a9f" strokeWidth="36" strokeLinecap="round" />
      {routeSegments.map(part => (
        <path key={part.d} d={part.d} stroke={speedColors[part.color]} strokeWidth="39" />
      ))}
    </g>

    {placeLabels.map(place => (
      <MapLabel key={place.text} x={place.x} y={place.y} $kind={place.kind}>{place.text}</MapLabel>
    ))}
    <CityLabel x="169" y="455">울산광역시</CityLabel>
    <VenueLabel x="851" y="447">울산문화예술회관</VenueLabel>
    <PeakLabel x="5" y="573">정상</PeakLabel>

    <RoadShield x={381} y={267} number="24" />
    <RoadShield x={627} y={257} number="7" />
    <RoadShield x={916} y={511} number="31" />
    <path d="M303 185 Q312 188 323 183 Q334 188 342 185 L349 192 Q345 198 348 207 Q350 222 338 226 Q328 227 323 229 Q318 227 308 226 Q296 222 298 207 Q301 198 297 192Z" fill="#3878c7" stroke="#66696e" strokeWidth="2" />
    <path d="M303 186 Q312 189 323 184 Q334 189 342 186 L347 192 L345 194 H300 L298 192Z" fill="#d96463" />
    <ShieldText x="323" y="216">65</ShieldText>

    <Pin x={933} y={331} color="#ff0030">
      <rect x="-12" y="-12" width="22" height="22" fill="#fff" />
    </Pin>
    <Pin x={968} y={344} color="#48b200">
      <path d="M-9 -14 L16 -1 L-9 12Z" fill="#fff" />
    </Pin>

    <GoogleText x="18" y="575">
      <tspan fill="#4285f4">G</tspan>
      <tspan fill="#ea4335">o</tspan>
      <tspan fill="#fbbc05">o</tspan>
      <tspan fill="#4285f4">g</tspan>
      <tspan fill="#34a853">l</tspan>
      <tspan fill="#ea4335">e</tspan>
    </GoogleText>
  </MapDrawing>
);

const sunRays = Array.from({ length: 18 }, (_, i) => i * 20);

const SunIcon = () => (
  <svg width="88" height="88" viewBox="-44 -44 88 88" aria-label="맑음">
    <circle r="24" fill="#ff8820" />
    <circle r="30" fill="none" stroke="#ff8820" strokeWidth="4" />
    {sunRays.map(angle => (
      <line key={angle} y1="-31" y2="-42" stroke="#ff8820" strokeWidth="3" strokeLinecap="round" transform={`rotate(${angle})`} />
    ))}
  </svg>
);

const PulseIcon = () => (
  <WaveIcon width="48" height="48" viewBox="0 0 48 48" fill="none" stroke="#58a6f5">
    <circle cx="24" cy="24" r="22" strokeWidth="3" />
    <path d="M10 26 L15 21 L19 27 L24 11 L29 36 L34 17 L38 28" strokeWidth="3" />
  </WaveIcon>
);

const stats = [
  { value: '49:06', label: '총 시간' },
  { value: '19.1', unit: 'km/h', label: '평균 속력', chart: true },
  { value: '40', unit: 'm', label: '총 상승', chart: true },
  { value: '37', unit: 'm', label: '총 하강' },
];

const tabs = ['개요', '통계', '랩', '차트', '장비'];

const App = () => (
  <Page>
    <GlobalStyle />
    <StatusBar>
      <StatusGroup gap={12}>
        <Clock>10:05</Clock>
        <svg width="35" height="40" viewBox="0 0 35 40">
          <rect y="2" width="35" height="36" rx="8" fill="#fff" />
          <path d="M17 0 L27 5 V35 L17 40 L8 35 V5Z" fill="#fff" />
          <path d="M4 9 Q4 5 9 5 M31 9 Q31 5 26 5 M4 31 Q4 35 9 35 M31 31 Q31 35 26 35 M9 16 V26 M27 16 V26 M12 12 Q17 9 23 12" fill="none" stroke="#000" strokeWidth="1" />
          <path d="M11 26 V23 L15 20 L17 22 V26Z M18 26 V22 L21 19 L24 22 V26Z M14 29 H22 L18 31Z" fill="#000" />
        </svg>
        <svg width="35" height="20" viewBox="0 0 35 20">
          <path d="M6 20 A6 6 0 0 1 5 9 A10 10 0 0 1 23 7 Q31 6 31 13 Q35 14 35 17 Q34 20 30 20Z" fill="#fff" />
        </svg>
        <svg width="37" height="36" viewBox="0 0 37 36">
          <path d="M18 0 C28 0 37 6 37 15 C37 25 28 31 18 30 L7 36 L9 28 C3 25 0 20 0 15 C0 6 8 0 18 0Z" fill="#fff" />
          <text x="18" y="20" textAnchor="middle" fontFamily="Roboto, sans-serif" fontSize="12" fontWeight="900" fill="#000">TALK</text>
        </svg>
        <Dot />
      </StatusGroup>
      <StatusGroup gap={11}>
        <svg width="44" height="34" viewBox="0 0 44 34" fill="none" stroke="#fff" strokeWidth="3" strokeLinecap="round">
          <path d="M2 10 Q13 -1 24 3 M6 15 Q14 7 22 11 M11 20 Q17 14 22 20" />
          <circle cx="17" cy="24" r="2" fill="#fff" stroke="none" />
          <circle cx="31" cy="10" r="4" />
          <path d="M27 9 Q28 4 33 1" />
          <path d="M28 21 V31 M24 28 L28 32 L32 28 M39 28 V19 M35 22 L39 18 L43 22" />
        </svg>
        <svg width="27" height="30" viewBox="0 0 27 30" stroke="#fff" strokeWidth="3" strokeLinecap="round">
          <path d="M2 24 V28 M10 17 V28 M17 9 V28 M25 2 V28" />
        </svg>
        <Battery>94</Battery>
      </StatusGroup>
    </StatusBar>

    <Header>
      <IconButton aria-label="뒤로">
        <svg width="47" height="47" viewBox="0 0 47 47" fill="none" stroke="#f4f4f4" strokeWidth="6">
          <path d="M46 23 H5 M25 2 L5 23 L25 45" />
        </svg>
      </IconButton>
      <HeaderTitle>산악 자전거</HeaderTitle>
      <IconButton aria-label="더 보기">
        <svg width="12" height="52" viewBox="0 0 12 52" fill="#f4f4f4">
          <path d="M0 0 H12 V12 H0Z M0 20 H12 V32 H0Z M0 40 H12 V52 H0Z" />
        </svg>
      </IconButton>
    </Header>

    <Tabs>
      {tabs.map((name, i) => (
        <Tab key={name} $active={i === 0}>
          <TabLabel $active={i === 0}>{name}</TabLabel>
        </Tab>
      ))}
    </Tabs>

    <MapPanel>
      <RouteMap />
      <WeatherPill>
        <Temperature>30°</Temperature>
        <SunIcon />
        <WindBadge>
          <WindDial viewBox="0 0 88 88">
            <circle cx="44" cy="44" r="42" fill="none" stroke="#f4f4f4" strokeWidth="3" />
            <path d="M6 61 L28 58 L21 79 Q12 73 6 61Z" fill="#f4f4f4" />
          </WindDial>
          17
        </WindBadge>
      </WeatherPill>
      <LegendPill>
        더 느림
        <LegendBar>
          {speedColors.map((color, i) => <LegendStep key={i} color={color} />)}
        </LegendBar>
        더 빠름
      </LegendPill>
    </MapPanel>

    <Details>
      <MetaRow>
        <svg width="40" height="40" viewBox="0 0 40 40" fill="none" stroke="#a6a6a6">
          <circle cx="9" cy="30" r="7" strokeWidth="2" />
          <circle cx="29" cy="24" r="7" strokeWidth="2" />
          <circle cx="17" cy="4" r="3" fill="#a6a6a6" stroke="none" />
          <path d="M13 10 L18 9 L21 13 L26 12 L26 14 L20 16 L17 14 L16 18 L20 20 L20 31 L18 31 L17 22 L8 20 L11 12Z" fill="#a6a6a6" stroke="none" />
          <path d="M13 39 L17 36 L22 35 L25 33 L29 35 L33 33 L38 35 V39Z" fill="#a6a6a6" stroke="none" />
        </svg>
        <MetaText>9월 6일 @ 오후 6:28</MetaText>
        <svg width="32" height="38" viewBox="0 0 32 38">
          <path d="M2 16 H30 V38 H2Z" fill="#a6a6a6" />
          <path d="M8 17 V10 A8 8 0 0 1 24 10 V17" fill="none" stroke="#a6a6a6" strokeWidth="3" />
        </svg>
      </MetaRow>
      <TitleRow>
        <Title>산악 자전거</Title>
        <IconButton aria-label="제목 편집">
          <svg width="48" height="50" viewBox="0 0 48 50">
            <path d="M36 2 L47 13 L18 44 L7 32Z" fill="#a6a6a6" />
            <path d="M8 32 L3 47 L18 43" fill="none" stroke="#a6a6a6" strokeWidth="3" />
          </svg>
        </IconButton>
      </TitleRow>
      <NoteLink href="#memo">메모 추가</NoteLink>

      <Distance>
        <Value $large>15.62<Unit>km</Unit></Value>
        <Label>거리</Label>
      </Distance>

      <StatGrid>
        {stats.map(stat => (
          <Stat key={stat.label}>
            <Value>
              {stat.value}
              {stat.unit && <Unit>{stat.unit}</Unit>}
              {stat.chart && <PulseIcon />}
            </Value>
            <Label>{stat.label}</Label>
          </Stat>
        ))}
      </StatGrid>

      <Actions>
        <ActionButton $grow={11}>
          <svg width="38" height="40" viewBox="0 0 38 40" fill="none" stroke="#f4f4f4" strokeWidth="3">
            <path d="M20 8 H3 V37 H32 V20 M31 1 V16 M23 8 H38" />
            <path d="M8 31 V26 L14 19 L18 25 L21 22 L27 29 V31Z" fill="#f4f4f4" stroke="none" />
          </svg>
          사진
        </ActionButton>
        <ActionButton $grow={10}>
          <svg width="38" height="38" viewBox="0 0 38 38" fill="none" stroke="#f4f4f4" strokeWidth="3">
            <circle cx="7" cy="19" r="4" />
            <circle cx="30" cy="6" r="4" />
            <circle cx="30" cy="32" r="4" />
            <path d="M11 17 L26 8 M11 21 L26 30" />
          </svg>
          공유
        </ActionButton>
      </Actions>
    </Details>

    <Rating>
      <Title>평가</Title>
      <RatingCard />
    </Rating>
    <NavArea>
      <NavHandle />
    </NavArea>
  </Page>
);

export default App;
